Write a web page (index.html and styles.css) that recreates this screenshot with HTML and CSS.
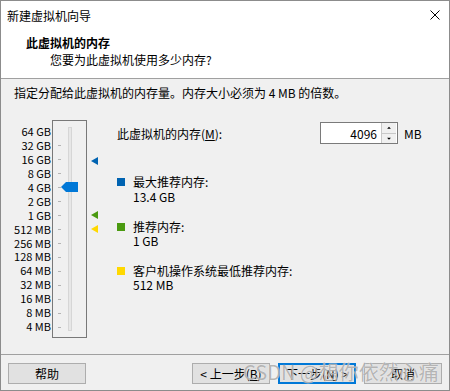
FILE: index.html
```html
<!DOCTYPE html>
<html lang="zh-CN">
<head>
    <meta charset="UTF-8">
    <title>新建虚拟机向导</title>
    <link rel="stylesheet" href="styles.css">
</head>
<body>
    <div class="window">
        <div class="titlebar">
            <span>新建虚拟机向导</span>
            <svg class="close" width="10" height="10" viewBox="0 0 10 10">
                <path d="M0.5 0.5 L9.5 9.5 M9.5 0.5 L0.5 9.5" stroke="#000" stroke-width="1" fill="none"/>
            </svg>
        </div>

        <div class="header">
            <div class="header-title">此虚拟机的内存</div>
            <div class="header-sub">您要为此虚拟机使用多少内存?</div>
        </div>

        <div class="content">
            <div class="intro">指定分配给此虚拟机的内存量。内存大小必须为 4 MB 的倍数。</div>

            <div class="main">
                <div class="slider">
                    <div class="scale">
                        <div>64 GB</div>
                        <div>32 GB</div>
                        <div>16 GB</div>
                        <div>8 GB</div>
                        <div>4 GB</div>
                        <div>2 GB</div>
                        <div>1 GB</div>
                        <div>512 MB</div>
                        <div>256 MB</div>
                        <div>128 MB</div>
                        <div>64 MB</div>
                        <div>32 MB</div>
                        <div>16 MB</div>
                        <div>8 MB</div>
                        <div>4 MB</div>
                    </div>
                    <svg class="track" width="50" height="220" viewBox="0 0 50 220">
                        <!-- 焦点框 -->
                        <rect x="1.5" y="0.5" width="34" height="217" fill="none" stroke="#000" stroke-dasharray="1 1"/>
                        <!-- 刻度 -->
                        <g stroke="#b4b4b4" stroke-width="1">
                            <line x1="7" x2="10" y1="25.5" y2="25.5"/>
                            <line x1="7" x2="10" y1="39.5" y2="39.5"/>
                            <line x1="7" x2="10" y1="53.5" y2="53.5"/>
                            <line x1="7" x2="10" y1="67.5" y2="67.5"/>
                            <line x1="7" x2="10" y1="81.5" y2="81.5"/>
                            <line x1="7" x2="10" y1="95.5" y2="95.5"/>
                            <line x1="7" x2="10" y1="109.5" y2="109.5"/>
                            <line x1="7" x2="10" y1="123.5" y2="123.5"/>
                            <line x1="7" x2="10" y1="137.5" y2="137.5"/>
                            <line x1="7" x2="10" y1="151.5" y2="151.5"/>
                            <line x1="7" x2="10" y1="165.5" y2="165.5"/>
                            <line x1="7" x2="10" y1="179.5" y2="179.5"/>
                            <line x1="7" x2="10" y1="193.5" y2="193.5"/>
                            <line x1="7" x2="10" y1="207.5" y2="207.5"/>
                        </g>
                        <rect x="17.5" y="7.5" width="3" height="203" fill="#e7e7e7" stroke="#d6d6d6"/>
                        <!-- 滑块 -->
                        <polygon points="10,67 15,62 27,62 27,72 15,72" fill="#0078d7"/>
                        <!-- 标记 -->
                        <polygon points="40,41 47,37 47,45" fill="#0063b1"/>
                        <polygon points="40,95 47,91 47,99" fill="#4a9a10"/>
                        <polygon points="40,109 47,105 47,113" fill="#ffd800"/>
                    </svg>
                </div>

                <div class="panel">
                    <div class="mem-row">
                        <label class="mem-label" for="mem">此虚拟机的内存(<u>M</u>):</label>
                        <div class="spin">
                            <input id="mem" type="text" value="4096">
                            <div class="spin-btns">
                                <svg width="14" height="10" viewBox="0 0 14 10"><path d="M5 6 L7 4 L9 6 Z" fill="#000"/></svg>
                                <svg width="14" height="10" viewBox="0 0 14 10"><path d="M5 4 L7 6 L9 4 Z" fill="#000"/></svg>
                            </div>
                        </div>
                        <span class="unit">MB</span>
                    </div>

                    <div class="legend first">
                        <span class="swatch blue"></span>
                        <div>
                            <div>最大推荐内存:</div>
                            <div class="value">13.4 GB</div>
                        </div>
                    </div>
                    <div class="legend">
                        <span class="swatch green"></span>
                        <div>
                            <div>推荐内存:</div>
                            <div>1 GB</div>
                        </div>
                    </div>
                    <div class="legend">
                        <span class="swatch yellow"></span>
                        <div>
                            <div>客户机操作系统最低推荐内存:</div>
                            <div>512 MB</div>
                        </div>
                    </div>
                </div>
            </div>
        </div>

        <div class="footer">
            <button class="btn">帮助</button>
            <div class="nav">
                <button class="btn">&lt; 上一步(<u>B</u>)</button>
                <button class="btn focus">下一步(<u>N</u>) &gt;</button>
                <button class="btn">取消</button>
            </div>
        </div>

        <div class="watermark">CSDN @想你依然心痛</div>
    </div>
</body>
</html>
```

FILE: styles.css
```css
body {
    margin: 0;
    font-family: "Noto Sans CJK SC", "Noto Sans", sans-serif;
    font-size: 12px;
    color: #000;
    background-color: #f0f0f0;
}
.window {
    position: relative;
    width: 450px;
    height: 391px;
    box-sizing: border-box;
    border: 1px solid #8c8c8c;
    display: flex;
    flex-direction: column;
    overflow: hidden;
}
.titlebar {
    height: 28px;
    background-color: #fff;
    display: flex;
    align-items: center;
    justify-content: space-between;
    padding-left: 6px;
    padding-right: 9px;
}
.header {
    height: 39px;
    padding-top: 5px;
    padding-bottom: 5px;
    background-color: #fff;
    border-bottom: 1px solid #a0a0a0;
}
.header-title {
    font-weight: bold;
    line-height: 17px;
    padding-left: 25px;
}
.header-sub {
    line-height: 17px;
    padding-left: 49px;
}
.content {
    flex: 1;
    padding: 6px 0 0 13px;
}
.intro {
    line-height: 16px;
}
.main {
    display: flex;
    margin-top: 19px;
}
.slider {
    display: flex;
}
.scale {
    width: 37px;
    padding-top: 5px;
    text-align: right;
    font-size: 11px;
    line-height: 13.93px;
}
.track {
    display: block;
}
.panel {
    margin-left: 16px;
}
.mem-row {
    display: flex;
    align-items: center;
    margin-top: 2px;
    height: 22px;
}
.mem-label {
    width: 203px;
}
.spin {
    display: flex;
    width: 78px;
    height: 22px;
    box-sizing: border-box;
    border: 1px solid #7a7a7a;
    background-color: #fff;
}
.spin input {
    width: 56px;
    border: none;
    padding: 0 4px 0 0;
    font-family: inherit;
    font-size: 12px;
    text-align: right;
    outline: none;
}
.spin-btns {
    display: flex;
    flex-direction: column;
    border-left: 1px solid #c8c8c8;
    background-color: #f0f0f0;
}
.spin-btns svg {
    display: block;
}
.spin-btns svg + svg {
    border-top: 1px solid #c8c8c8;
}
.unit {
    margin-left: 6px;
}
.legend {
    display: flex;
    line-height: 14px;
    margin-top: 16px;
}
.legend.first {
    margin-top: 31px;
}
.legend.first .value {
    margin-top: 1px;
}
.swatch {
    width: 8px;
    height: 8px;
    margin: 3px 8px 0 0;
}
.blue {
    background-color: #0063b1;
}
.green {
    background-color: #4a9a10;
}
.yellow {
    background-color: #ffd800;
}
.footer {
    height: 36px;
    border-top: 1px solid #a0a0a0;
    display: flex;
    justify-content: space-between;
    padding: 8px 7px 0 7px;
    box-sizing: border-box;
}
.nav {
    display: flex;
    gap: 8px;
}
.btn {
    width: 78px;
    height: 21px;
    padding: 0;
    font-family: inherit;
    font-size: 12px;
    background-color: #e1e1e1;
    border: 1px solid #adadad;
}
.btn.focus {
    border: 2px solid #0078d7;
}
.watermark {
    position: absolute;
    left: 242px;
    top: 358px;
    font-size: 20px;
    line-height: 26px;
    color: rgba(110, 110, 110, 0.5);
    text-shadow: 0 0 1px #fff;
    white-space: nowrap;
    pointer-events: none;
}
```
